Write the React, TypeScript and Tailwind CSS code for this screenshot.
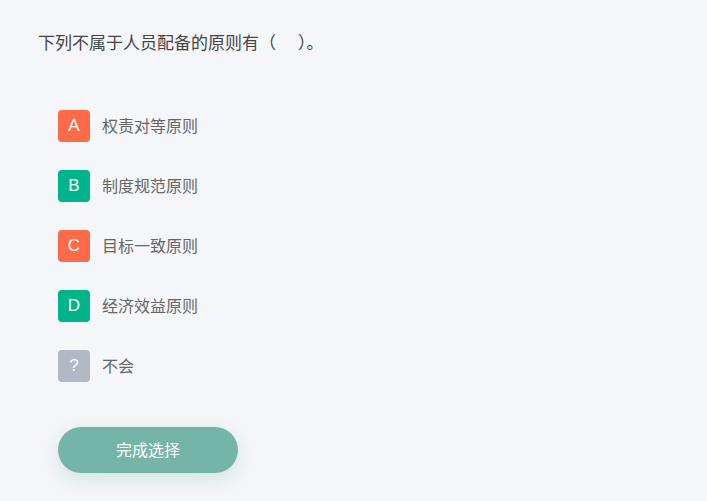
const options = [
  { key: 'A', text: '权责对等原则', color: 'bg-[#ff6a48]' },
  { key: 'B', text: '制度规范原则', color: 'bg-[#00b48a]' },
  { key: 'C', text: '目标一致原则', color: 'bg-[#ff6a48]' },
  { key: 'D', text: '经济效益原则', color: 'bg-[#00b48a]' },
  { key: '?', text: '不会', color: 'bg-[#b2b8c4]' },
]

export default function App() {
  return (
    <div className="w-[707px] h-[501px] bg-[#f5f6fa] font-['Noto_Sans_CJK_SC',sans-serif] overflow-hidden">
      <div className="pt-[30px] pl-[38px] text-[17px] leading-[24px] text-[#444]">
        下列不属于人员配备的原则有（<span className="inline-block w-[22px]" />）。
      </div>

      <div className="mt-[56px] pl-[58px] flex flex-col gap-[28px]">
        {options.map((o) => (
          <div key={o.key} className="flex items-center gap-[12px] h-[32px]">
            <div
              className={`w-[32px] h-[32px] rounded-[4px] ${o.color} text-white flex items-center justify-center text-[17px] font-['Liberation_Sans',sans-serif]`}
            >
              {o.key}
            </div>
            <span className="text-[16px] leading-[20px] text-[#666] -mt-[2px]">{o.text}</span>
          </div>
        ))}
      </div>

      <div className="mt-[45px] pl-[58px]">
        <button className="w-[180px] h-[46px] rounded-full bg-[#74b5a7] text-white text-[16px] leading-[20px] pb-[2px] shadow-[0_6px_20px_rgba(116,181,167,0.28)]">
          完成选择
        </button>
      </div>
    </div>
  )
}
